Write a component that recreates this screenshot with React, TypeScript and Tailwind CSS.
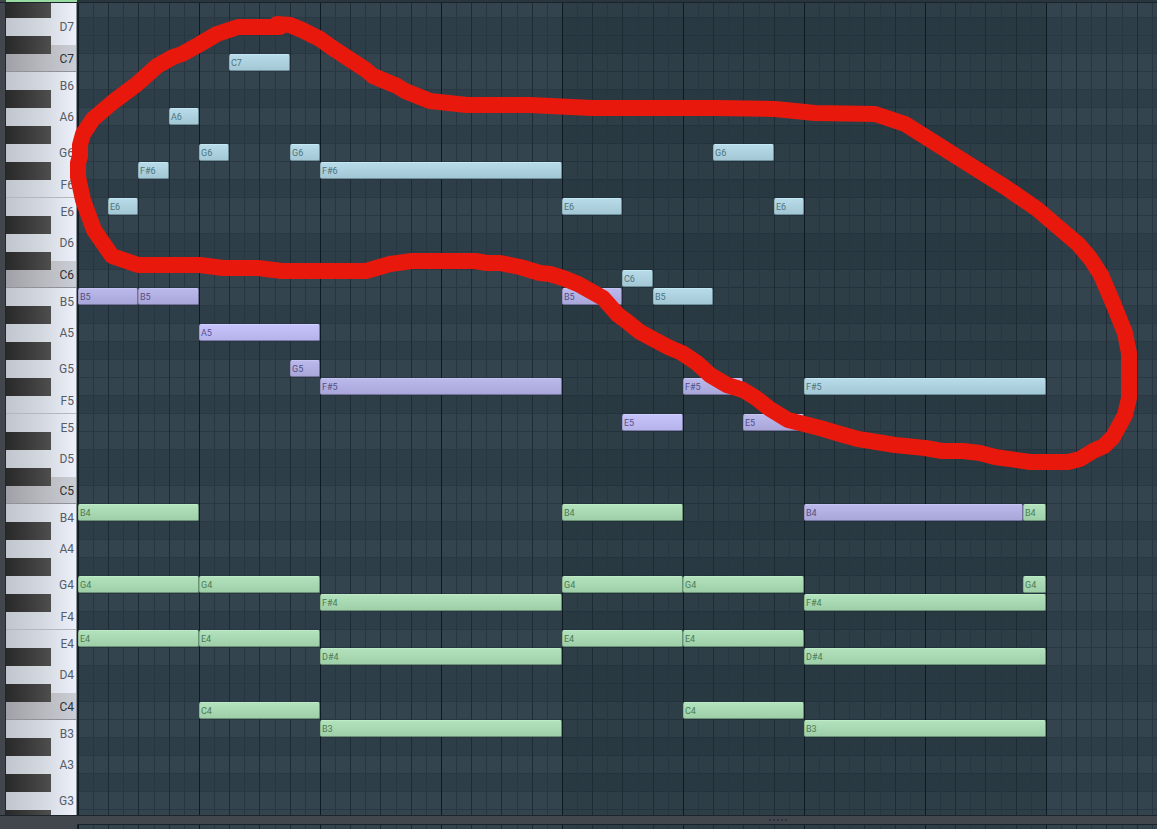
import React from "react";

type Tone = "green" | "violet" | "bright" | "blue";
type Note = [pitch: string, start: number, end: number, tone: Tone];

const NAMES = ["C", "C#", "D", "D#", "E", "F", "F#", "G", "G#", "A", "A#", "B"];
const BARS = [0, 1, 2, 3, 4, 5, 6, 7, 8];
const TOP = 7 * 12 + 3;
const ROW_COUNT = 46;

const COLUMNS =
  "repeat(9, 7px 8px 7px 8px 7px 8px 7px 8px 8px 8px 7px 8px 7px 8px 7px 8px)";
const ROWS = "14px repeat(44, 18px) 6px";

const DARK_ROWS = ["A#", "G#", "F", "D", "C#"];

const NOTES: Note[] = [
  ["C7", 20, 28, "blue"],
  ["A6", 12, 16, "blue"],
  ["G6", 16, 20, "blue"],
  ["G6", 28, 32, "blue"],
  ["G6", 84, 92, "blue"],
  ["F#6", 8, 12, "blue"],
  ["F#6", 32, 64, "blue"],
  ["E6", 4, 8, "blue"],
  ["E6", 64, 72, "blue"],
  ["E6", 92, 96, "blue"],
  ["C6", 72, 76, "blue"],
  ["B5", 0, 8, "violet"],
  ["B5", 8, 16, "violet"],
  ["B5", 64, 72, "violet"],
  ["B5", 76, 84, "blue"],
  ["A5", 16, 32, "bright"],
  ["G5", 28, 32, "violet"],
  ["F#5", 32, 64, "violet"],
  ["F#5", 80, 88, "violet"],
  ["F#5", 96, 128, "blue"],
  ["E5", 72, 80, "bright"],
  ["E5", 88, 96, "violet"],
  ["B4", 0, 16, "green"],
  ["B4", 64, 80, "green"],
  ["B4", 96, 125, "violet"],
  ["B4", 125, 128, "green"],
  ["G4", 0, 16, "green"],
  ["G4", 16, 32, "green"],
  ["G4", 64, 80, "green"],
  ["G4", 80, 96, "green"],
  ["G4", 125, 128, "green"],
  ["F#4", 32, 64, "green"],
  ["F#4", 96, 128, "green"],
  ["E4", 0, 16, "green"],
  ["E4", 16, 32, "green"],
  ["E4", 64, 80, "green"],
  ["E4", 80, 96, "green"],
  ["D#4", 32, 64, "green"],
  ["D#4", 96, 128, "green"],
  ["C4", 16, 32, "green"],
  ["C4", 80, 96, "green"],
  ["B3", 32, 64, "green"],
  ["B3", 96, 128, "green"],
];

const TONES: Record<Tone, string> = {
  green:
    "from-[#b2e2bb] to-[#9ecfa8] border-t-[#bfeac7] border-l-[#88b391] border-r-[#6c9275] border-b-[#6c9275] text-[#4b7a55]",
  violet:
    "from-[#bbb9eb] to-[#a9a7d9] border-t-[#c6c4f2] border-l-[#9391bf] border-r-[#75739c] border-b-[#75739c] text-[#504e83]",
  bright:
    "from-[#c6c2fa] to-[#b6b2ea] border-t-[#d2ceff] border-l-[#9f9bd0] border-r-[#7f7ba8] border-b-[#7f7ba8] text-[#55518a]",
  blue:
    "from-[#b7dbe8] to-[#a3c7d4] border-t-[#c4e8f4] border-l-[#8daebb] border-r-[#6f8f9a] border-b-[#6f8f9a] text-[#4c7380]",
};

const KEY_HEIGHT: Record<string, string> = {
  B: "h-[27px]",
  A: "h-[36px]",
  G: "h-[36px]",
  F: "h-[27px]",
  E: "h-[27px]",
  D: "h-[36px]",
  C: "h-[27px]",
};

function rowOf(pitch: string) {
  const name = pitch.slice(0, -1);
  const octave = Number(pitch.slice(-1));
  return TOP - (octave * 12 + NAMES.indexOf(name)) + 1;
}

const WHITE_KEYS = [
  "D7", "C7", "B6", "A6", "G6", "F6", "E6", "D6", "C6", "B5", "A5", "G5", "F5",
  "E5", "D5", "C5", "B4", "A4", "G4", "F4", "E4", "D4", "C4", "B3", "A3", "G3",
];

function Keyboard() {
  return (
    <div className="grid h-full w-[70px] overflow-hidden bg-[linear-gradient(90deg,#c1c5cd_0%,#d3d7de_50%,#e2e6ef_80%,#edf0fa_100%)] font-['Roboto',sans-serif]">
      <div className="col-start-1 row-start-1 flex flex-col pt-[6px]">
        {WHITE_KEYS.map((key) => {
          const name = key[0];
          const isC = name === "C";
          return (
            <div
              key={key}
              className={`flex shrink-0 items-center justify-end pr-[2px] text-[12px] leading-4 ${KEY_HEIGHT[name]} ${
                isC
                  ? "border-b border-[#8f9298] bg-[linear-gradient(90deg,#9fa1a6_0%,#b6b8bd_50%,#cbced5_100%)] pt-px text-[#2d3036]"
                  : name === "F"
                    ? "border-b border-[#b4b7be] pt-px text-[#565c68]"
                    : "text-[#565c68]"
              }`}
            >
              {key}
            </div>
          );
        })}
      </div>
      <div className="col-start-1 row-start-1 flex w-[45px] flex-col">
        {Array.from({ length: ROW_COUNT }, (_, i) => {
          const black = NAMES[(TOP - i) % 12].includes("#");
          return (
            <div
              key={i}
              className={`shrink-0 ${i === 0 ? "h-[15px]" : "h-[18px]"} ${
                black ? "bg-linear-to-r from-[#29292a] to-[#4e4e4f]" : ""
              }`}
            />
          );
        })}
      </div>
    </div>
  );
}

function BarLines({ bar }: { bar: number }) {
  const shaded = bar >= 4 && bar < 8;
  return (
    <div
      className={`grid grid-cols-[15px_15px_15px_15px_16px_15px_15px_15px] ${shaded ? "bg-[#001820]/13" : ""}`}
      style={{
        gridColumn: `${bar * 16 + 1} / span 16`,
        gridRow: "1 / -1",
      }}
    >
      {[0, 1, 2, 3, 4, 5, 6, 7].map((step) => (
        <div
          key={step}
          className={`border-l ${
            step === 0
              ? "border-[#0e1a22]"
              : step % 2 === 0
                ? "border-[#1e2b34]"
                : "border-[#273640]"
          }`}
        />
      ))}
    </div>
  );
}

function NoteGrid() {
  return (
    <main
      className="grid min-w-0 flex-1 overflow-hidden border-l border-[#18242b] font-['Roboto',sans-serif]"
      style={{ gridTemplateColumns: COLUMNS, gridTemplateRows: ROWS }}
    >
      {Array.from({ length: ROW_COUNT }, (_, i) => {
        const dark = DARK_ROWS.includes(NAMES[(TOP - i) % 12]);
        return (
          <div
            key={i}
            className={`${i === 0 ? "" : "border-t border-[#293842]"} ${dark ? "bg-[#2e3e48]" : "bg-[#34444e]"}`}
            style={{ gridColumn: "1 / -1", gridRow: i + 1 }}
          />
        );
      })}
      {BARS.map((bar) => (
        <BarLines key={bar} bar={bar} />
      ))}
      {NOTES.map(([pitch, start, end, tone]) => (
        <div
          key={`${pitch}-${start}`}
          className={`mt-px flex items-center overflow-hidden rounded-[2px] border bg-linear-to-b pl-px text-[9px] leading-3 ${TONES[tone]}`}
          style={{
            gridColumn: `${start + 1} / ${end + 1}`,
            gridRow: rowOf(pitch),
          }}
        >
          {pitch}
        </div>
      ))}
    </main>
  );
}

function Annotation() {
  return (
    <svg
      className="pointer-events-none absolute top-0 left-0"
      width="1157"
      height="829"
      viewBox="0 0 1157 829"
      fill="none"
      aria-hidden="true"
    >
      <path
        d="M277 24L280 27H238L217 34L200 44L182 54L173 57L157 66L137 84L113 102L93 119L83 134L80 145V156L78 163V177L83 200L94 230L112 256L138 265H200L223 268H258L282 271H366L390 264L412 261H475L487 263H500L520 267L540 273L550 274L563 278L578 284L603 298L618 315L625 320L640 332L653 339L668 347L682 353L697 363L710 375L727 385L743 390L756 398L770 409L788 420L820 428L840 434L858 439L895 445L925 448L942 451H963L980 453L995 457L1030 462H1068L1080 459L1093 451L1104 446L1113 437L1125 415L1129 398V353L1125 333L1113 303L1101 275L1090 258L1078 244L1058 227L1037 209L1005 187L970 165L905 124L875 114L815 113L775 109L715 108H592L530 105H467L430 101L405 91L397 86L373 76L366 70L331 47L320 39L302 30L290 25L277 24"
        stroke="#e8190c"
        strokeWidth="16"
        strokeLinejoin="round"
        strokeLinecap="round"
      />
    </svg>
  );
}

export default function App() {
  return (
    <div className="relative flex min-h-screen flex-col overflow-hidden bg-[#42474d]">
      <div className="flex h-[3px] border-b border-[#18232a] pl-[6px]">
        <div className="w-[71px] bg-[#98dca1]" />
        <div className="flex-1 bg-[#2a353d]" />
      </div>
      <div className="flex h-[813px] border-b border-[#1c252c]">
        <div className="w-[6px] shrink-0 border-r border-[#24282c]" />
        <div className="w-[71px] shrink-0 border-r border-[#8b9096]">
          <Keyboard />
        </div>
        <NoteGrid />
      </div>
      <div className="flex h-[8px] items-center pl-[769px]">
        <div className="flex gap-[2px]">
          {[0, 1, 2, 3, 4].map((dot) => (
            <span key={dot} className="size-[2px] bg-[#2c333a]" />
          ))}
        </div>
      </div>
      <div
        className="ml-[77px] grid h-[5px] overflow-hidden border-t border-l border-[#18242b] bg-[#34444e]"
        style={{ gridTemplateColumns: COLUMNS }}
      >
        {BARS.map((bar) => (
          <BarLines key={bar} bar={bar} />
        ))}
      </div>
      <Annotation />
    </div>
  );
}
